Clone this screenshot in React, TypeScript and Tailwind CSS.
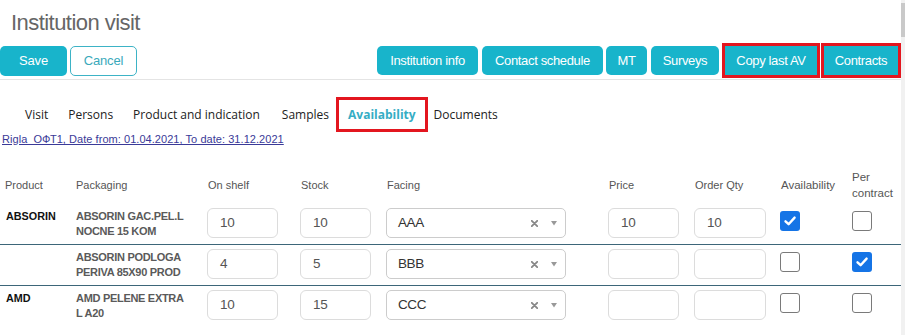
import React from "react";

type Row = {
  product: string;
  pack: [string, string];
  onShelf: string;
  stock: string;
  facing: string;
  price: string;
  qty: string;
  avail: boolean;
  contract: boolean;
};

const rows: Row[] = [
  { product: "ABSORIN", pack: ["ABSORIN GAC.PEL.L", "NOCNE 15 KOM"], onShelf: "10", stock: "10", facing: "AAA", price: "10", qty: "10", avail: true, contract: false },
  { product: "", pack: ["ABSORIN PODLOGA", "PERIVA 85X90 PROD"], onShelf: "4", stock: "5", facing: "BBB", price: "", qty: "", avail: false, contract: true },
  { product: "AMD", pack: ["AMD PELENE EXTRA", "L A20"], onShelf: "10", stock: "15", facing: "CCC", price: "", qty: "", avail: false, contract: false },
];

function Box({ value, w }: { value: string; w: string }) {
  return (
    <div className={`${w} h-[30px] rounded-[6px] border border-[#dcdcdc] bg-white pl-[12px] flex items-center text-[13.5px] tracking-[-0.3px] text-[#555]`}>
      {value}
    </div>
  );
}

function Check({ checked }: { checked: boolean }) {
  if (checked) {
    return (
      <div className="mt-[3px] w-[20px] h-[20px] rounded-[3px] bg-[#1574e6] flex items-center justify-center">
        <svg width="14" height="14" viewBox="0 0 14 14">
          <path d="M2.5 7.3 L5.6 10.2 L11.6 3.6" fill="none" stroke="#fff" strokeWidth="2.4" strokeLinecap="round" strokeLinejoin="round" />
        </svg>
      </div>
    );
  }
  return <div className="mt-[3px] w-[20px] h-[20px] rounded-[3px] border border-[#7a7a7a] bg-white" />;
}

const teal = "bg-[#18b4cb]";

export default function App() {
  return (
    <div className="flex min-h-[335px] bg-white font-['Liberation_Sans',Arial,sans-serif]">
      <div className="w-[901px]">
        <div className="pt-[10px] pl-[11px] text-[22px] leading-[26px] tracking-[-0.55px] text-[#666]">Institution visit</div>

        <div className="mt-[10px] flex items-start pb-[3px] border-b border-[#e4e4e4]">
          <div className={`w-[67px] h-[30px] rounded-[5px] ${teal} text-white text-[13px] tracking-[-0.2px] flex items-center justify-center`}>Save</div>
          <div className="ml-[3px] w-[67px] h-[30px] rounded-[5px] border border-[#3db3c6] text-[#3aa9bb] text-[13px] tracking-[-0.2px] flex items-center justify-center">Cancel</div>
          <div className="flex-1" />
          <div className={`w-[101px] h-[29px] rounded-[5px] ${teal} text-white text-[13px] tracking-[-0.35px] flex items-center justify-center`}>Institution info</div>
          <div className={`ml-[4px] w-[121px] h-[29px] rounded-[5px] ${teal} text-white text-[13px] tracking-[-0.35px] flex items-center justify-center`}>Contact schedule</div>
          <div className={`ml-[3px] w-[41px] h-[29px] rounded-[5px] ${teal} text-white text-[13px] tracking-[-0.35px] flex items-center justify-center`}>MT</div>
          <div className={`ml-[4px] w-[68px] h-[29px] rounded-[5px] ${teal} text-white text-[13px] tracking-[-0.35px] flex items-center justify-center`}>Surveys</div>
          <div className={`ml-[6px] w-[92px] h-[29px] ${teal} text-white text-[13px] tracking-[-0.35px] flex items-center justify-center outline-[3px] outline-solid outline-[#e3161f]`}>Copy last AV</div>
          <div className={`ml-[7px] mr-[3px] w-[74px] h-[29px] ${teal} text-white text-[13px] tracking-[-0.35px] flex items-center justify-center outline-[3px] outline-solid outline-[#e3161f]`}>Contracts</div>
        </div>

        <div className="mt-[20px] pl-[15px] flex items-center font-['Open_Sans',sans-serif] text-[12px] text-[#222]">
          <div className="h-[29px] px-[10px] flex items-center">Visit</div>
          <div className="h-[29px] px-[10px] flex items-center">Persons</div>
          <div className="h-[29px] px-[10px] flex items-center">Product and indication</div>
          <div className="h-[29px] px-[10px] ml-[2px] flex items-center">Samples</div>
          <div className="h-[29px] px-[9px] flex items-center font-bold text-[#35adc4] bg-white outline-[3px] outline-solid outline-[#e3161f]">Availability</div>
          <div className="h-[29px] px-[9px] flex items-center">Documents</div>
        </div>

        <div className="mt-[4px] pl-[2px] text-[11px] leading-[13px] text-[#3a3a98] underline tracking-[0.05px]">Rigla_ОФТ1, Date from: 01.04.2021, To date: 31.12.2021</div>

        <div className="mt-[19px] grid grid-cols-[75px_132px_93px_86px_222px_86px_86px_71px_50px] h-[39px] items-center text-[11px] leading-[16px] text-[#555]">
          <div className="pl-[5px]">Product</div>
          <div className="pl-[1px]">Packaging</div>
          <div className="pl-[1px]">On shelf</div>
          <div className="pl-[1px]">Stock</div>
          <div className="pl-[1px]">Facing</div>
          <div className="pl-[1px]">Price</div>
          <div className="pl-[1px]">Order Qty</div>
          <div className="pl-[1px] text-[11.5px]">Availability</div>
          <div className="pl-[1px] text-[11.5px]">Per<br />contract</div>
        </div>

        {rows.map((r, i) => (
          <div
            key={i}
            className={`grid grid-cols-[75px_132px_93px_86px_222px_86px_86px_71px_50px] items-start pt-[4px] pb-[5px] ${i < rows.length - 1 ? "border-b border-[#3d6679]" : ""}`}
          >
            <div className="pl-[6px] pt-[1px] text-[10.8px] leading-[15px] font-bold text-[#111]">{r.product}</div>
            <div className="pl-[1px] pt-[1px] text-[11px] tracking-[-0.3px] leading-[15px] font-bold text-[#5a5a5a] whitespace-nowrap">
              {r.pack[0]}
              <br />
              {r.pack[1]}
            </div>
            <Box value={r.onShelf} w="w-[71px]" />
            <Box value={r.stock} w="w-[71px]" />
            <div className="w-[180px] h-[30px] rounded-[5px] border border-[#cccccc] bg-white pl-[11px] pr-[8px] flex items-center text-[13.5px] tracking-[-0.4px] text-[#333]">
              <span className="flex-1">{r.facing}</span>
              <svg width="7" height="7" viewBox="0 0 7 7" className="mr-[13px]">
                <path d="M0.8 0.8 L6.2 6.2 M6.2 0.8 L0.8 6.2" stroke="#888" strokeWidth="1.8" strokeLinecap="round" />
              </svg>
              <svg width="6" height="5" viewBox="0 0 6 5"><path d="M0 0 L6 0 L3 4.5 Z" fill="#999" /></svg>
            </div>
            <Box value={r.price} w="w-[71px]" />
            <Box value={r.qty} w="w-[72px]" />
            <div><Check checked={r.avail} /></div>
            <div className="pl-[1px]"><Check checked={r.contract} /></div>
          </div>
        ))}
      </div>
      <div className="w-[4px] bg-[#f1f1f1] pt-[3px]">
        <div className="h-[34px] bg-[#c9c9c9]" />
      </div>
    </div>
  );
}
